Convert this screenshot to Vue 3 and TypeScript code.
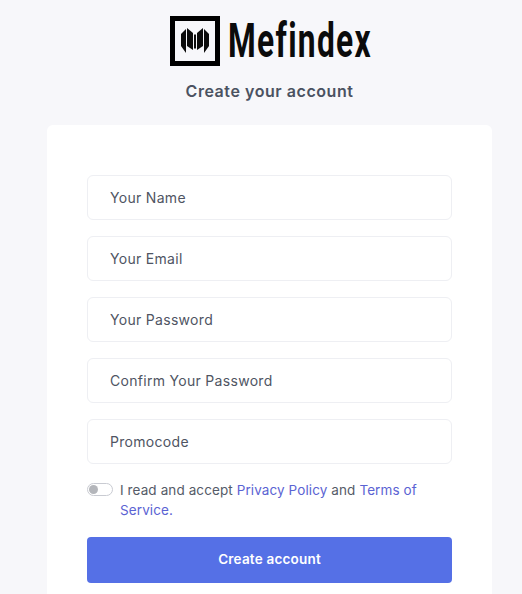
<script setup lang="ts">
const fields: string[] = ['Your Name', 'Your Email', 'Your Password', 'Confirm Your Password', 'Promocode']
</script>

<template>
  <main class="page">
    <header class="brand">
      <div class="logo">
        <span class="mark">
          <svg width="28" height="26" viewBox="0 0 28 26" aria-hidden="true">
            <path d="M0 6 L5 1 V25 L0 18 Z" fill="#0b0b0b" />
            <path d="M28 6 L23 1 V25 L28 18 Z" fill="#0b0b0b" />
            <path d="M6 0 L12 5 V22 L6 18 Z" fill="#0b0b0b" />
            <path d="M22 0 L16 5 V22 L22 18 Z" fill="#0b0b0b" />
            <path d="M13 6 L14 7 L15 6 V20 L14 21 L13 20 Z" fill="#0b0b0b" />
          </svg>
        </span>
        <span class="word"><span class="word-inner">Mefindex</span></span>
      </div>
      <h1 class="title">Create your account</h1>
    </header>
    <form class="card" @submit.prevent>
      <div class="fields">
        <input v-for="f in fields" :key="f" class="field" type="text" :placeholder="f" />
      </div>
      <div class="terms">
        <span class="toggle"><span class="knob"></span></span>
        <p class="terms-text">I read and accept <a href="#">Privacy Policy</a> and <a href="#">Terms of Service.</a></p>
      </div>
      <button class="submit" type="submit">Create account</button>
    </form>
  </main>
</template>

<style scoped>
.page {
  width: 445px;
  margin-left: 47px;
  font-family: "Inter", "Liberation Sans", sans-serif;
  color: #4a5060;
}
.brand {
  display: flex;
  flex-direction: column;
  align-items: center;
  padding-top: 16px;
}
.logo {
  display: flex;
  align-items: center;
  gap: 8px;
  height: 50px;
}
.mark {
  box-sizing: border-box;
  width: 50px;
  height: 50px;
  border: 5px solid #000;
  display: flex;
  align-items: center;
  justify-content: center;
}
.word {
  display: block;
  width: 142px;
  height: 50px;
}
.word-inner {
  display: block;
  font-family: "Roboto", "Liberation Sans", sans-serif;
  font-weight: 700;
  font-size: 48px;
  line-height: 50px;
  letter-spacing: 2px;
  color: #0b0b0b;
  white-space: nowrap;
  transform: scaleX(0.66);
  transform-origin: left center;
}
.title {
  margin: 15px 0 0;
  font-size: 16px;
  line-height: 20px;
  font-weight: 600;
  letter-spacing: 0.55px;
  color: #4b5261;
}
.card {
  box-sizing: border-box;
  margin-top: 24px;
  height: 480px;
  padding: 50px 40px 0;
  background: #fff;
  border-radius: 6px;
}
.fields {
  display: flex;
  flex-direction: column;
  gap: 16px;
}
.field {
  box-sizing: border-box;
  width: 100%;
  height: 45px;
  padding: 0 22px 1px;
  border: 1px solid #eeeff3;
  border-radius: 6px;
  background: #fff;
  font: 400 14px "Inter", "Liberation Sans", sans-serif;
  letter-spacing: 0.3px;
  outline: none;
}
.field::placeholder {
  color: #4f5563;
  opacity: 1;
}
.terms {
  display: flex;
  align-items: flex-start;
  gap: 7px;
  margin-top: 16px;
}
.toggle {
  box-sizing: border-box;
  flex: none;
  width: 26px;
  height: 13px;
  margin-top: 3px;
  border: 1px solid #c9cbd2;
  border-radius: 7px;
  background: #fff;
  display: flex;
  align-items: center;
  padding-left: 1px;
}
.knob {
  width: 9px;
  height: 9px;
  border-radius: 50%;
  background: #b4b6bb;
}
.terms-text {
  margin: 0;
  font-size: 13.5px;
  line-height: 20px;
  letter-spacing: 0.1px;
  color: #555b68;
}
.terms-text a {
  color: #5b63d3;
  text-decoration: none;
}
.submit {
  display: block;
  width: 100%;
  height: 46px;
  margin-top: 17px;
  padding: 0 0 2px;
  border: 0;
  border-radius: 4px;
  background: #5570e6;
  color: #fff;
  font: 600 13.5px "Inter", "Liberation Sans", sans-serif;
  letter-spacing: 0.2px;
}
</style>

<style>
html, body {
  margin: 0;
  height: 100%;
  overflow: hidden;
  background: #f7f7fa;
}
</style>
